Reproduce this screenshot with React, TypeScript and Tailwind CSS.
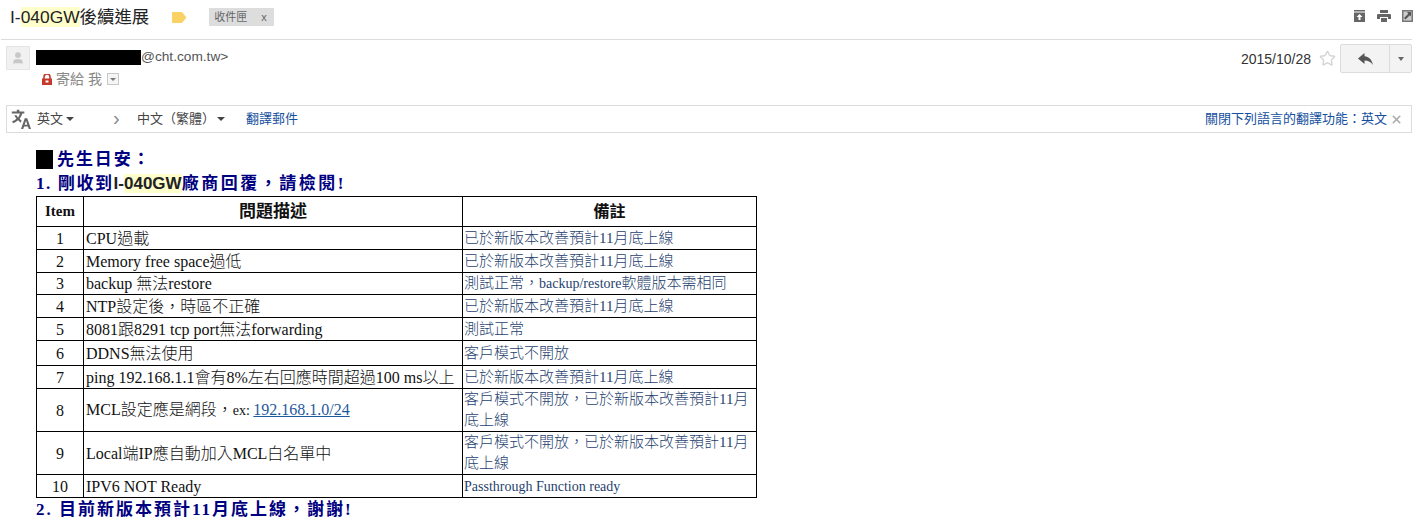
import { Star, User, X } from 'lucide-react';

const SANS = 'font-["Liberation_Sans","Noto_Sans_CJK_TC",sans-serif]';
const SERIF = 'font-["Liberation_Serif","Noto_Sans_CJK_TC",serif]';

const rows = [
  { item: '1', desc: 'CPU過載', note: '已於新版本改善預計11月底上線', h: 'h-[23px]' },
  { item: '2', desc: 'Memory free space過低', note: '已於新版本改善預計11月底上線', h: 'h-[23px]' },
  { item: '3', desc: 'backup 無法restore', note: <>測試正常，<span className="text-[14px]">backup/restore</span>軟體版本需相同</>, h: 'h-[22px]' },
  { item: '4', desc: 'NTP設定後，時區不正確', note: '已於新版本改善預計11月底上線', h: 'h-[23px]' },
  { item: '5', desc: '8081跟8291 tcp port無法forwarding', note: '測試正常', h: 'h-[23px]' },
  { item: '6', desc: 'DDNS無法使用', note: '客戶模式不開放', h: 'h-[25px]' },
  { item: '7', desc: 'ping 192.168.1.1會有8%左右回應時間超過100 ms以上', note: '已於新版本改善預計11月底上線', h: 'h-[23px]' },
  { item: '8', desc: <>MCL設定應是網段，<span className="text-[14px]">ex: </span></>, link: '192.168.1.0/24', note: '客戶模式不開放，已於新版本改善預計11月底上線', h: 'h-[43px]' },
  { item: '9', desc: 'Local端IP應自動加入MCL白名單中', note: '客戶模式不開放，已於新版本改善預計11月底上線', h: 'h-[43px]' },
  { item: '10', desc: 'IPV6 NOT Ready', note: <span className="text-[14px]">Passthrough Function ready</span>, h: 'h-[23px]' },
];

function Caret() {
  return <span className="inline-block w-0 h-0 border-x-[4px] border-x-transparent border-t-[4px] border-t-[#444]" />;
}

function TranslateIcon() {
  return (
    <svg width="20" height="20" viewBox="0 0 24 24" fill="#666">
      <path d="M1 3h6V1h3v2h6v2.5h-2.4c-.7 2.5-1.9 4.6-3.3 6.3l2.4 2.4-1 2.3-3.2-3C6.600 15 4.700 16.200 2.300 17L1.400 14.700c2-.7 3.700-1.700 5.100-3-1-1.300-1.800-2.700-2.400-4.200h2.600c.4 1 1 2 1.700 2.800 1-1.300 1.800-2.800 2.300-4.800H1z" />
      <path d="M16.500 11h3L24 24h-2.700l-1-3h-4.600l-1 3H12zm-.1 7.800h3.200L18 14z" />
    </svg>
  );
}

export default function App() {
  return (
    <div className={`w-[1423px] h-[525px] overflow-hidden bg-white ${SANS}`}>
      {/* subject */}
      <div className="h-[40px] ml-px mr-[11px] border-b border-[#dcdcdc] flex items-start justify-between pt-[4px] pl-[9px]">
        <div className="flex items-center h-[26px]">
          <span className="text-[17.4px] text-[#222]">
            I-<span className="bg-[#ffffcc]">040GW</span>後續進展
          </span>
          <svg width="15" height="11" viewBox="0 0 15 11" className="ml-[23px]">
            <path d="M1 0h9l4.500 5.500L10 11H1a1 1 0 0 1-1-1V1a1 1 0 0 1 1-1z" fill="#fad165" />
          </svg>
          <span className="ml-[22px] h-[18px] w-[65px] bg-[#dddddd] flex items-center pl-[5px] text-[11px] text-[#666]">
            收件匣<span className="ml-[14px] text-[#666]">x</span>
          </span>
        </div>
        <div className="flex items-center mt-[6px] mr-[-1px]">
          <svg width="11" height="12" viewBox="0 0 11 12">
            <path d="M0 0h11v1.500H0zM0 2.500h11V12H0z" fill="#666" />
            <path d="M5.500 4l3 3H6.500v3h-2V7h-2z" fill="#fff" />
          </svg>
          <svg width="14" height="12" viewBox="0 0 14 12" className="ml-[12px]">
            <path d="M3 0h8v3H3zM1 4h12a1 1 0 0 1 1 1v4h-3V7H3v2H0V5a1 1 0 0 1 1-1zM4 8h6v4H4z" fill="#666" />
          </svg>
          <svg width="11" height="12" viewBox="0 0 11 12" className="ml-[11px]">
            <path d="M0 0h11v12H0z" fill="#777" />
            <path d="M1.500 1.500h8v9h-8z" fill="#ccc" />
            <path d="M5 2h4v4.500L7.800 5.200 3.500 9.500 2 8l4.300-4.300z" fill="#555" />
          </svg>
        </div>
      </div>

      {/* sender */}
      <div className="h-[65px] flex justify-between pl-[6px] pr-[11px] pt-[6px]">
        <div className="flex items-start">
          <div className="w-[24px] h-[24px] bg-[#f1f1f1] border border-[#e5e5e5] flex items-center justify-center">
            <User size={14} fill="#c8c8c8" stroke="#c8c8c8" />
          </div>
          <div className="ml-[6px]">
            <div className="flex items-center h-[15px] mt-[4px] text-[13.7px] text-[#555]">
              <span className="w-[105px] h-[15px] bg-black" />@cht.com.tw&gt;
            </div>
            <div className="flex items-center h-[20px] ml-[6px] mt-[4px] text-[14px] text-[#888]">
              <svg width="10" height="11" viewBox="0 0 10 11">
                <path d="M2 5V3a3 3 0 0 1 6 0v2" fill="none" stroke="#c5392c" strokeWidth="1.600" />
                <path d="M0 4.500h10V11H0z" fill="#c5392c" />
                <path d="M3.500 6.500h3v2h-3z" fill="#fff" />
              </svg>
              <span className="ml-[4px]">寄給 我</span>
              <span className="ml-[5px] w-[12px] h-[12px] border border-[#c8c8c8] bg-[#f5f5f5] flex items-center justify-center">
                <span className="w-0 h-0 border-x-[3px] border-x-transparent border-t-[3px] border-t-[#777]" />
              </span>
            </div>
          </div>
        </div>
        <div className="flex items-start">
          <span className="text-[14px] text-[#333] mt-[3px]">2015/10/28</span>
          <Star size={17} stroke="#d5d5d5" className="ml-[8px] mt-[4px]" />
          <div className="ml-[4px] w-[72px] h-[29px] -mt-[2px] flex border border-[#dcdcdc] rounded-[2px] bg-[#f3f3f3]">
            <div className="w-[49px] border-r border-[#dcdcdc] flex items-center justify-center">
              <svg width="15" height="12" viewBox="0 0 15 12">
                <path d="M6.500 0v3.200C11.500 3.700 14 7 15 12c-2-3-4.500-4.500-8.500-4.500V11L0 5.500z" fill="#555" />
              </svg>
            </div>
            <div className="flex-1 flex items-center justify-center">
              <span className="w-0 h-0 border-x-[3.500px] border-x-transparent border-t-[4px] border-t-[#666]" />
            </div>
          </div>
        </div>
      </div>

      {/* translate bar */}
      <div className="h-[28px] ml-[6px] mr-[11px] border border-[#dcdcdc] flex items-center justify-between text-[13px] pl-[4px] pr-[8px]">
        <div className="flex items-center">
          <TranslateIcon />
          <span className="ml-[6px] text-[#444] flex items-center gap-[3px] w-[76px]">英文<Caret /></span>
          <span className="text-[#888] text-[20px] leading-none w-[24px] -mt-[3px]">›</span>
          <span className="text-[#444] flex items-center w-[109px]">中文（繁體）<span className="ml-[2px] flex"><Caret /></span></span>
          <span className="text-[#15509e]">翻譯郵件</span>
        </div>
        <div className="flex items-center text-[#15509e]">
          關閉下列語言的翻譯功能：英文
          <X size={13} strokeWidth={3} stroke="#aaa" className="ml-[3px]" />
        </div>
      </div>

      {/* message */}
      <div className={`ml-[36px] mt-[14px] ${SERIF}`}>
        <div className="h-[25px] flex items-center text-[17px] font-bold text-[#000080] tracking-[1.9px] whitespace-pre">
          <span className="w-[17px] h-[19px] bg-black mr-[4px]" />先生日安：
        </div>
        <div className="h-[24px] flex items-center text-[17px] font-bold text-[#000080] tracking-[1.6px] whitespace-pre">
          1. 剛收到
          <span className={`${SANS} tracking-normal text-[17px] text-[#222]`}>I-<span className="bg-[#ffffcc]">040GW</span></span>
          <span className="tracking-[2.5px]">廠商回覆，請檢閱!</span>
        </div>
        <table className="w-[721px] table-fixed border-collapse text-[16px] leading-[21px] text-[#111] border border-black">
          <colgroup>
            <col className="w-[47px]" />
            <col className="w-[379px]" />
            <col className="w-[294px]" />
          </colgroup>
          <thead>
            <tr className="h-[30px] font-bold">
              <th className="border border-black font-bold p-0 text-[15px]">Item</th>
              <th className="border border-black font-bold p-0 text-[17px]">問題描述</th>
              <th className="border border-black font-bold p-0">備註</th>
            </tr>
          </thead>
          <tbody className="font-light">
            {rows.map((row) => (
              <tr key={row.item} className={row.h}>
                <td className="border border-black text-center p-0">{row.item}</td>
                <td className="border border-black pl-[2px] py-0 pr-0 whitespace-nowrap">
                  {row.desc}
                  {row.link && <span className="text-[#1f5a9e] underline">{row.link}</span>}
                </td>
                <td className="border border-black pl-[1px] py-0 pr-[2px] text-[15px] text-[#1f3f6e]">{row.note}</td>
              </tr>
            ))}
          </tbody>
        </table>
        <div className="h-[24px] flex items-center text-[17px] font-bold text-[#000080] tracking-[2px] whitespace-pre">
          2. 目前新版本預計11月底上線，謝謝!
        </div>
      </div>
    </div>
  );
}
